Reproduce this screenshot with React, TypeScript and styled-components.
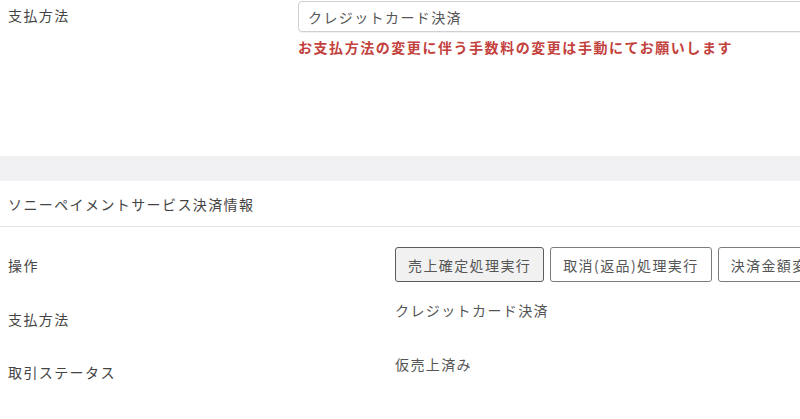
import React from "react";
import styled, { createGlobalStyle } from "styled-components";

const Global = createGlobalStyle`
  html, body { margin: 0; padding: 0; background: #fff; }
  body {
    font-family: "Noto Sans CJK JP", "Noto Sans", sans-serif;
    font-size: 14px;
    letter-spacing: 1.4px;
    color: #444;
    overflow: hidden;
  }
`;

const Page = styled.div`
  width: 800px;
  height: 419px;
  overflow: hidden;
`;

const TopSection = styled.section`
  height: 155px;
  padding-top: 1px;
  display: grid;
  grid-template-columns: 298px 1fr;
  align-content: start;
`;

const Label = styled.div<{ $top?: number }>`
  padding-left: 8px;
  padding-top: ${(p) => p.$top ?? 0}px;
  line-height: 20px;
  color: #444;
  white-space: nowrap;
`;

const Field = styled.div`
  display: flex;
  flex-direction: column;
  min-width: 0;
`;

const Input = styled.div`
  box-sizing: border-box;
  height: 31px;
  width: 540px;
  border: 1px solid #cfcfd4;
  border-radius: 4px;
  box-shadow: 0 1px 1px rgba(0, 0, 0, 0.06);
  padding: 0 9px;
  display: flex;
  align-items: center;
  color: #555;
  white-space: nowrap;
`;

const Note = styled.div`
  margin-top: 5px;
  line-height: 20px;
  font-weight: 700;
  letter-spacing: 1.55px;
  color: #c3413d;
  white-space: nowrap;
`;

const Band = styled.div`
  height: 25px;
  background: #f0f0f3;
`;

const SectionHeader = styled.div`
  height: 45px;
  padding-left: 8px;
  display: flex;
  align-items: center;
  border-bottom: 1px solid #e4e4e6;
  color: #444;
  white-space: nowrap;
`;

const Rows = styled.div`
  padding-top: 20px;
`;

const Row = styled.div<{ $h: number }>`
  display: grid;
  grid-template-columns: 395px 1fr;
  height: ${(p) => p.$h}px;
  align-items: start;
`;

const Value = styled.div`
  line-height: 20px;
  color: #555;
  white-space: nowrap;
`;

const Buttons = styled.div`
  display: flex;
  gap: 6px;
  white-space: nowrap;
  overflow: hidden;
`;

const Button = styled.button<{ $primary?: boolean }>`
  box-sizing: border-box;
  height: 35px;
  padding: 0 12px;
  font-family: inherit;
  font-size: 14px;
  letter-spacing: 1.4px;
  color: #555;
  background: ${(p) => (p.$primary ? "#f1f1f1" : "#fff")};
  border: 1.5px solid ${(p) => (p.$primary ? "#5c5c5c" : "#7c7c7c")};
  border-radius: 3px;
  flex-shrink: 0;
`;

export default function App() {
  return (
    <Page>
      <Global />
      <TopSection>
        <Label $top={4}>支払方法</Label>
        <Field>
          <Input>クレジットカード決済</Input>
          <Note>お支払方法の変更に伴う手数料の変更は手動にてお願いします</Note>
        </Field>
      </TopSection>
      <Band />
      <SectionHeader>ソニーペイメントサービス決済情報</SectionHeader>
      <Rows>
        <Row $h={53}>
          <Label $top={8}>操作</Label>
          <Buttons>
            <Button $primary>売上確定処理実行</Button>
            <Button>取消(返品)処理実行</Button>
            <Button>決済金額変更</Button>
          </Buttons>
        </Row>
        <Row $h={54}>
          <Label $top={9}>支払方法</Label>
          <Value>クレジットカード決済</Value>
        </Row>
        <Row $h={54}>
          <Label $top={8}>取引ステータス</Label>
          <Value>仮売上済み</Value>
        </Row>
      </Rows>
    </Page>
  );
}
